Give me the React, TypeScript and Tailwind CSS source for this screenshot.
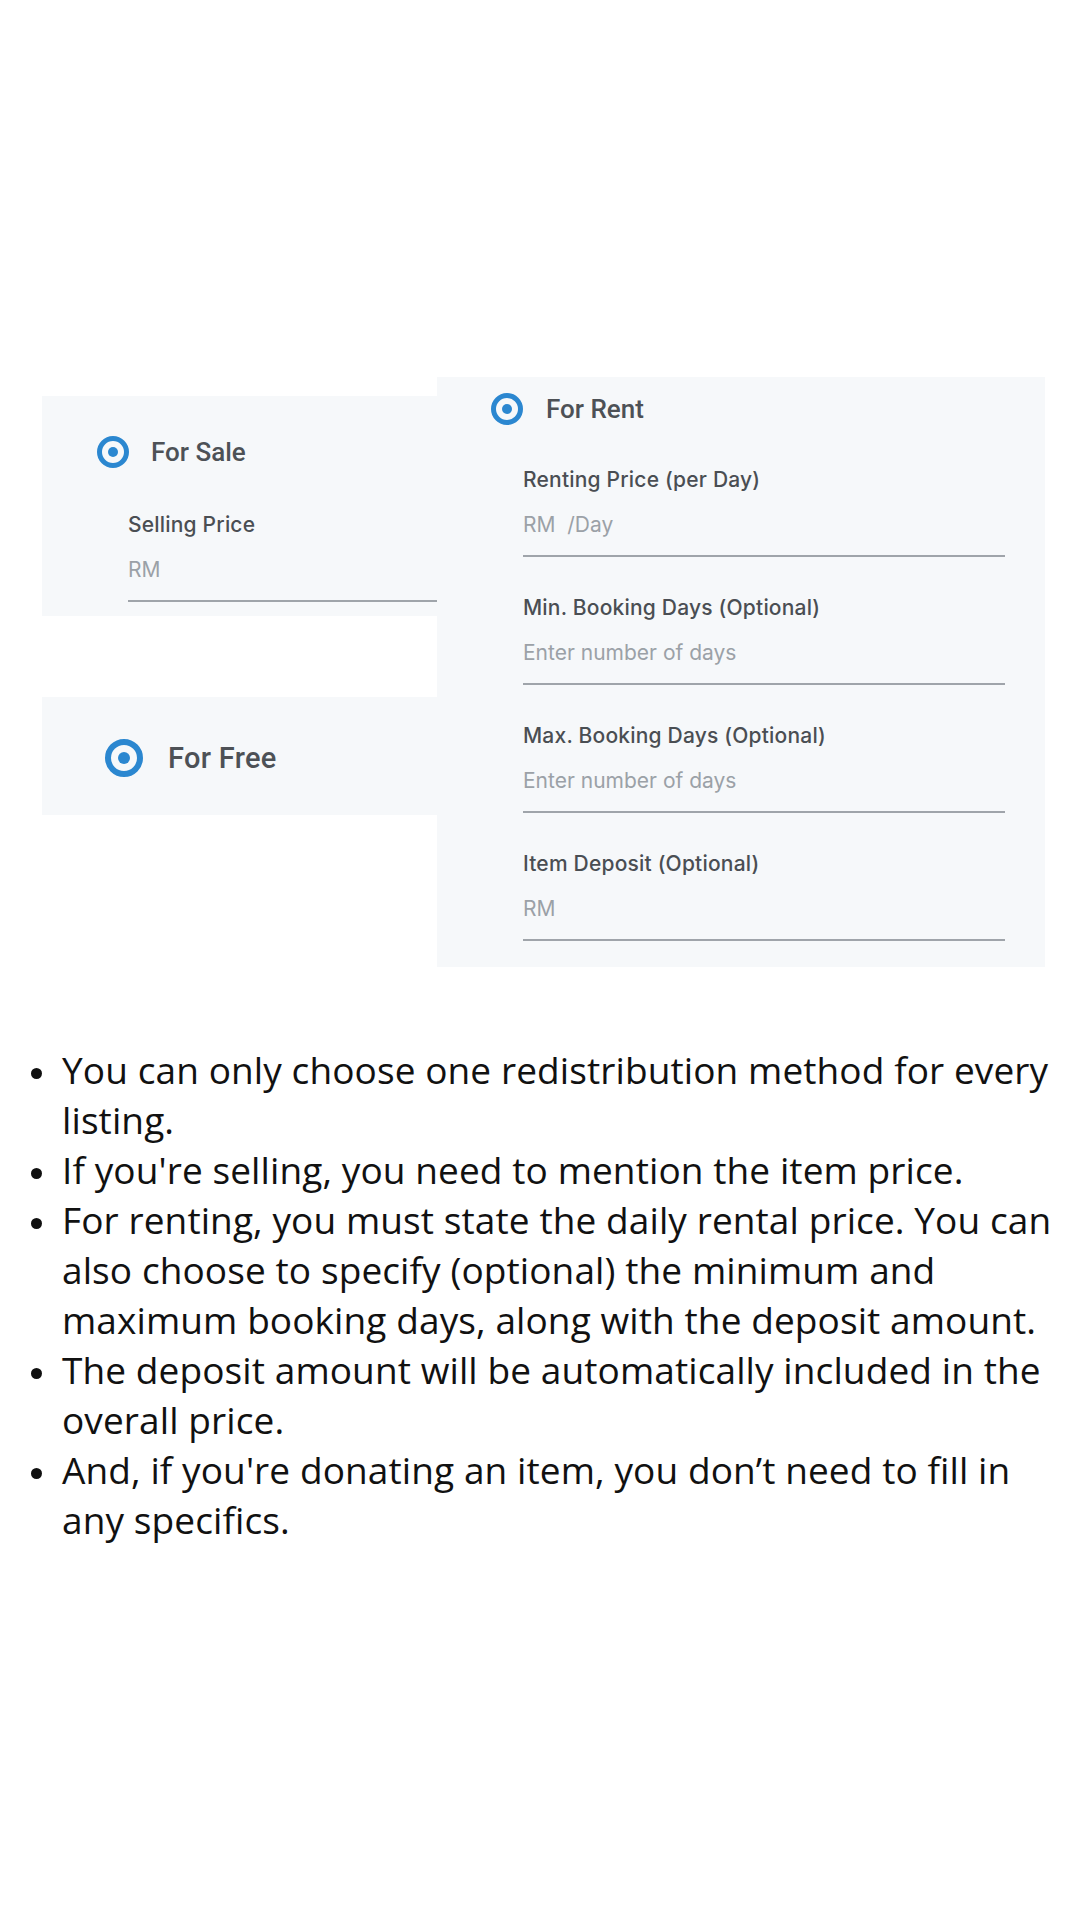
import React from "react";

function Radio({ big = false }: { big?: boolean }) {
  return big ? (
    <div className="w-[38px] h-[38px] rounded-full border-[6px] border-[#2b87d0] flex items-center justify-center shrink-0">
      <div className="w-[12px] h-[12px] rounded-full bg-[#2b87d0]" />
    </div>
  ) : (
    <div className="w-[32px] h-[32px] rounded-full border-[5px] border-[#2b87d0] flex items-center justify-center shrink-0">
      <div className="w-[10px] h-[10px] rounded-full bg-[#2b87d0]" />
    </div>
  );
}

function Field({ label, placeholder }: { label: string; placeholder: string }) {
  return (
    <div className="flex flex-col font-['Inter',sans-serif]">
      <div className="text-[21px] leading-[28px] font-medium text-[#4a4e53] tracking-[0.2px] mb-[17px]">{label}</div>
      <div className="text-[21px] leading-[28px] text-[#9ba1a7] pb-[16px] border-b-2 border-[#9fa4aa] whitespace-pre">
        {placeholder}
      </div>
    </div>
  );
}

const bullets = [
  "You can only choose one redistribution method for every listing.",
  "If you're selling, you need to mention the item price.",
  "For renting, you must state the daily rental price. You can also choose to specify (optional) the minimum and maximum booking days, along with the deposit amount.",
  "The deposit amount will be automatically included in the overall price.",
  "And, if you're donating an item, you don\u2019t need to fill in any specifics.",
];

export default function App() {
  return (
    <div className="w-[1080px] h-[1920px] bg-white flex flex-col pt-[377px] font-['Roboto',sans-serif]">
      <div className="flex pl-[42px]">
        <div className="w-[395px] mt-[19px] flex flex-col gap-[81px]">
          <div className="h-[220px] bg-[#f6f8fa] pt-[40px] pl-[55px] flex flex-col">
            <div className="flex items-center gap-[22px] h-[32px]">
              <Radio />
              <span className="text-[26px] leading-[32px] font-medium text-[#4d5156]">For Sale</span>
            </div>
            <div className="mt-[43px] ml-[31px]">
              <Field label="Selling Price" placeholder="RM" />
            </div>
          </div>
          <div className="h-[118px] bg-[#f6f8fa] pl-[63px] pt-[4px] flex items-center gap-[25px]">
            <Radio big />
            <span className="text-[29px] leading-[36px] font-medium text-[#4d5156] tracking-[0.3px]">For Free</span>
          </div>
        </div>
        <div className="w-[608px] h-[590px] bg-[#f6f8fa] pt-[16px] pl-[54px] pr-[40px] flex flex-col">
          <div className="flex items-center gap-[23px] h-[32px]">
            <Radio />
            <span className="text-[26px] leading-[32px] font-medium text-[#4d5156]">For Rent</span>
          </div>
          <div className="mt-[41px] ml-[32px] flex flex-col gap-[37px]">
            <Field label="Renting Price (per Day)" placeholder="RM  /Day" />
            <Field label="Min. Booking Days (Optional)" placeholder="Enter number of days" />
            <Field label="Max. Booking Days (Optional)" placeholder="Enter number of days" />
            <Field label="Item Deposit (Optional)" placeholder="RM" />
          </div>
        </div>
      </div>
      <ul className="mt-[78px] flex flex-col font-['Open_Sans',sans-serif] text-[37px] leading-[50px] text-[#111111] tracking-[0.1px] w-[1070px]">
        {bullets.map((b, i) => (
          <li key={i} className="flex">
            <div className="w-[62px] shrink-0 flex justify-start pl-[31px] pt-[23px]">
              <div className="w-[11px] h-[11px] rounded-full bg-[#111111]" />
            </div>
            <span className="flex-1">{b}</span>
          </li>
        ))}
      </ul>
    </div>
  );
}
